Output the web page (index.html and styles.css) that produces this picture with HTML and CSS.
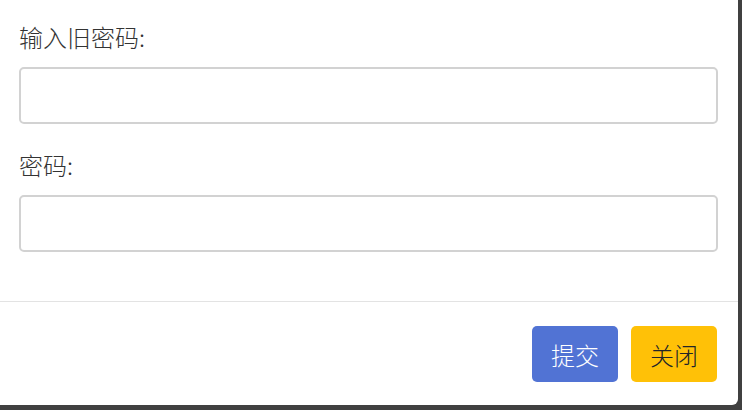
FILE: index.html
```html
<!DOCTYPE html>
<html lang="zh-CN">
<head>
    <meta charset="UTF-8">
    <meta name="viewport" content="width=device-width, initial-scale=1.0">
    <title>修改密码</title>
    <link rel="stylesheet" href="styles.css">
</head>
<body>
    <div class="modal">
        <div class="modal-body">
            <div class="field">
                <label for="oldpwd">输入旧密码:</label>
                <input type="password" id="oldpwd">
            </div>
            <div class="field">
                <label for="pwd">密码:</label>
                <input type="password" id="pwd">
            </div>
        </div>
        <div class="modal-footer">
            <button class="btn btn-primary">提交</button>
            <button class="btn btn-warning">关闭</button>
        </div>
    </div>
</body>
</html>
```

FILE: styles.css
```css
body { margin: 0; background-color: #404040; font-family: "Noto Sans CJK SC", "Noto Sans", sans-serif; color: #333; }
.modal { width: 738px; height: 405px; background-color: #fff; border-radius: 0 0 6px 0; display: flex; flex-direction: column; }
.modal-body { padding: 21px 20px 0 19px; display: flex; flex-direction: column; gap: 25px; height: 280px; border-bottom: 1px solid #e3e3e3; }
.field { display: flex; flex-direction: column; gap: 14px; }
label { font-size: 24px; font-weight: 300; line-height: 32px; color: #333; }
input { height: 57px; box-sizing: border-box; border: 2px solid #d2d2d2; border-radius: 5px; padding: 6px 12px; font-size: 20px; }
.modal-footer { display: flex; justify-content: flex-end; gap: 13px; padding: 24px 21px 0 0; }
.btn { width: 86px; height: 56px; border: none; border-radius: 5px; font-family: inherit; font-size: 24px; font-weight: 300; cursor: pointer; }
.btn-primary { background-color: #5173d4; color: #fff; }
.btn-warning { background-color: #ffc107; color: #212529; }
```
